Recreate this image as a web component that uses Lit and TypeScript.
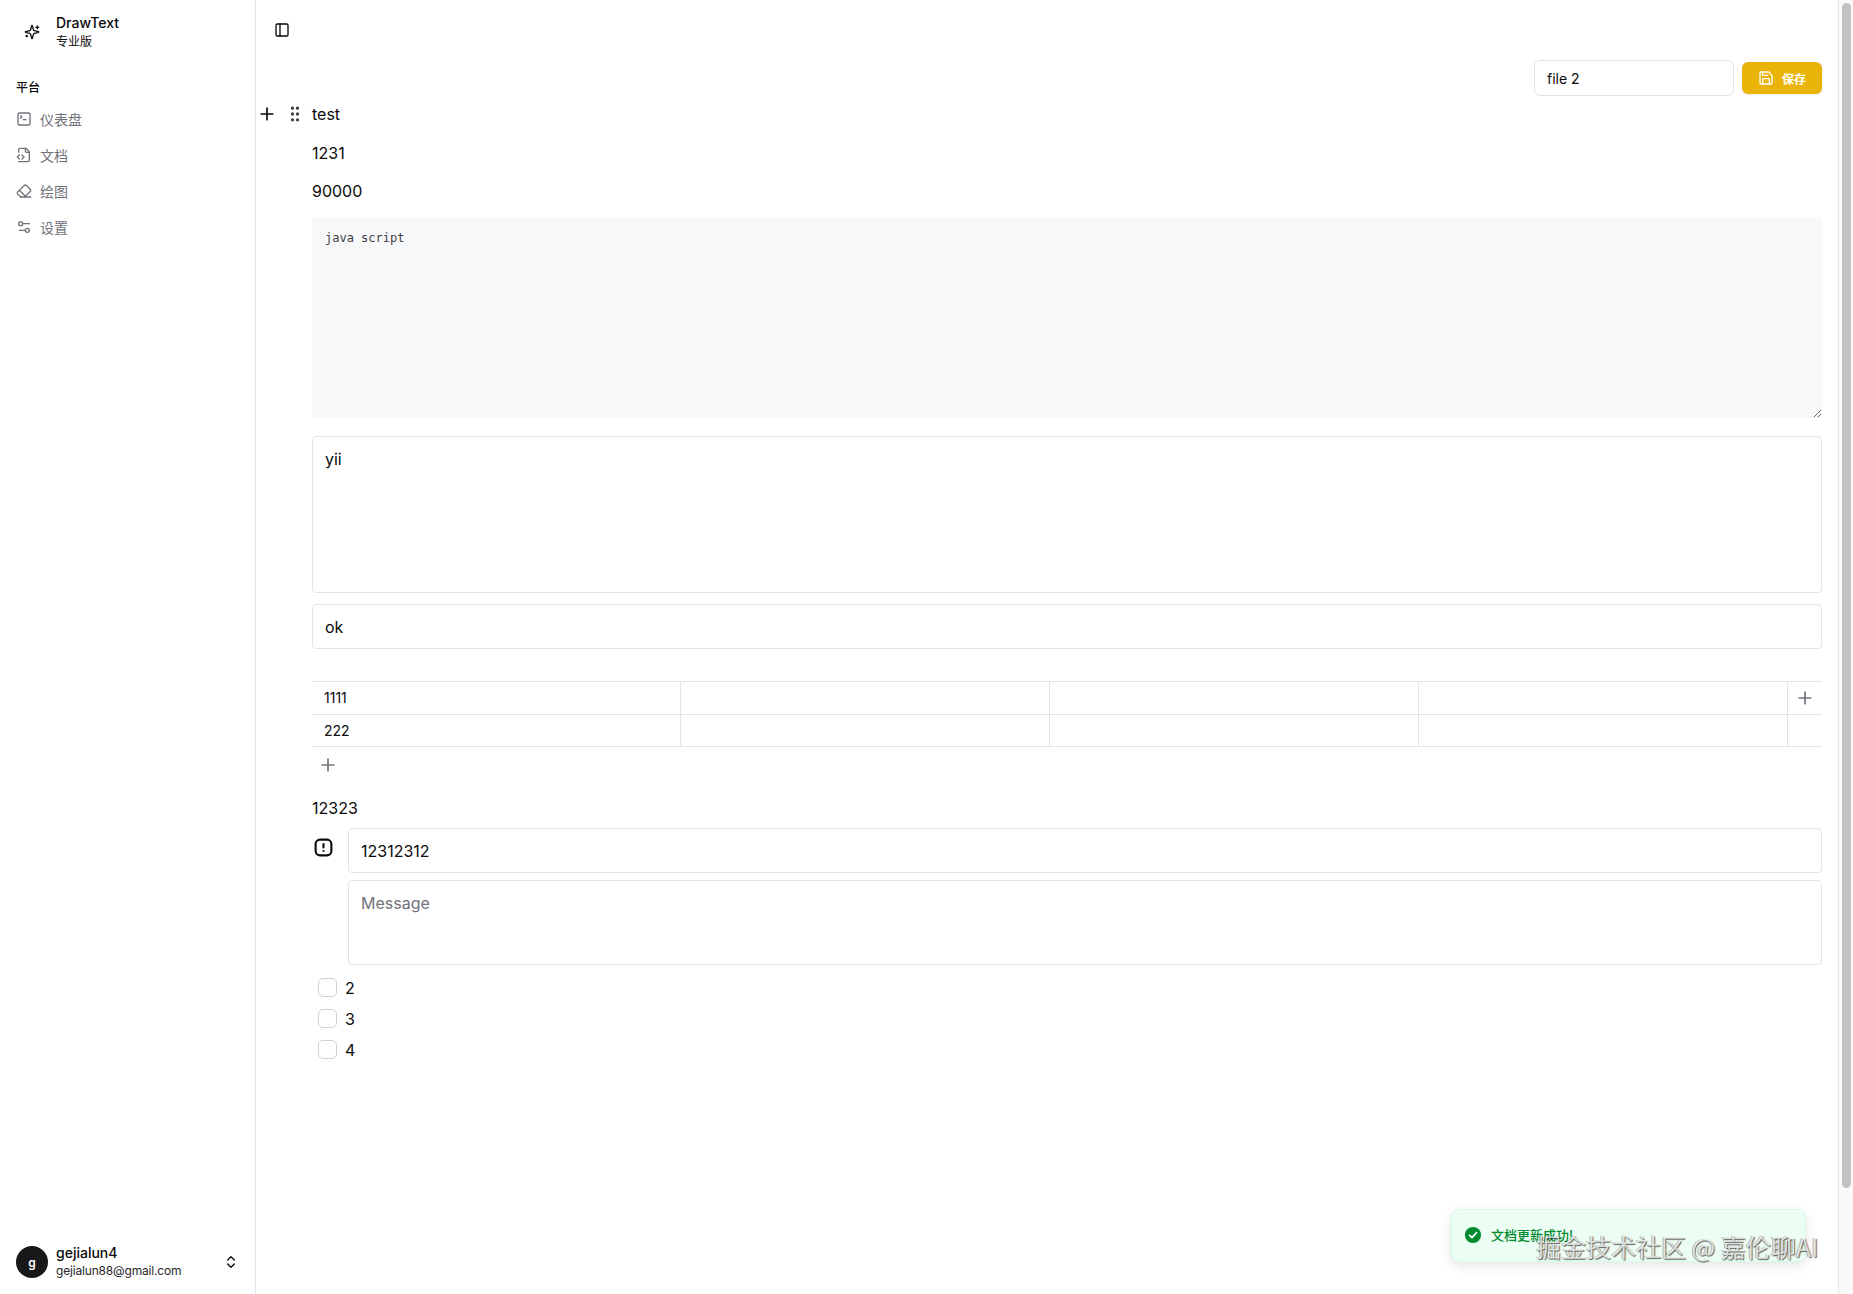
import { LitElement, html, css, svg } from "lit";
import { customElement } from "lit/decorators.js";

const icon = (body: unknown, cls = "i16") =>
  html`<svg class=${cls} viewBox="0 0 24 24" fill="none" stroke="currentColor" stroke-width="2" stroke-linecap="round" stroke-linejoin="round">${body}</svg>`;

const ICONS = {
  sparkles: svg`<path d="M9.937 15.5A2 2 0 0 0 8.5 14.063l-6.135-1.582a.5.5 0 0 1 0-.962L8.5 9.936A2 2 0 0 0 9.937 8.5l1.582-6.135a.5.5 0 0 1 .963 0L14.063 8.5A2 2 0 0 0 15.5 9.937l6.135 1.581a.5.5 0 0 1 0 .964L15.5 14.063a2 2 0 0 0-1.437 1.437l-1.582 6.135a.5.5 0 0 1-.963 0z"/><path d="M20 3v4"/><path d="M22 5h-4"/><path d="M4 17v2"/><path d="M5 18H3"/>`,
  terminal: svg`<path d="m7 11 2-2-2-2"/><path d="M11 13h4"/><rect width="18" height="18" x="3" y="3" rx="2"/>`,
  file: svg`<path d="M4 22h14a2 2 0 0 0 2-2V7l-5-5H6a2 2 0 0 0-2 2v4"/><path d="M14 2v4a2 2 0 0 0 2 2h4"/><path d="m5 12-3 3 3 3"/><path d="m9 18 3-3-3-3"/>`,
  eraser: svg`<path d="m7 21-4.3-4.3c-1-1-1-2.5 0-3.4l9.6-9.6c1-1 2.5-1 3.4 0l5.6 5.6c1 1 1 2.5 0 3.4L13 21"/><path d="M22 21H7"/><path d="m5 11 9 9"/>`,
  settings: svg`<path d="M20 7h-9"/><path d="M14 17H5"/><circle cx="17" cy="17" r="3"/><circle cx="7" cy="7" r="3"/>`,
  panel: svg`<rect width="18" height="18" x="3" y="3" rx="2"/><path d="M9 3v18"/>`,
  save: svg`<path d="M15.2 3a2 2 0 0 1 1.4.6l3.8 3.8a2 2 0 0 1 .6 1.4V19a2 2 0 0 1-2 2H5a2 2 0 0 1-2-2V5a2 2 0 0 1 2-2z"/><path d="M17 21v-7a1 1 0 0 0-1-1H8a1 1 0 0 0-1 1v7"/><path d="M7 3v4a1 1 0 0 0 1 1h7"/>`,
  chevrons: svg`<path d="m7 15 5 5 5-5"/><path d="m7 9 5-5 5 5"/>`,
  plus: svg`<path d="M5 12h14"/><path d="M12 5v14"/>`,
  alert: svg`<rect width="18" height="18" x="3" y="3" rx="5"/><path d="M12 8v4"/><path d="M12 16h.01"/>`,
  grip: svg`<g fill="currentColor"><circle cx="9" cy="5" r="1"/><circle cx="9" cy="12" r="1"/><circle cx="9" cy="19" r="1"/><circle cx="15" cy="5" r="1"/><circle cx="15" cy="12" r="1"/><circle cx="15" cy="19" r="1"/></g>`,
};

const NAV: [unknown, string][] = [
  [ICONS.terminal, "仪表盘"],
  [ICONS.file, "文档"],
  [ICONS.eraser, "绘图"],
  [ICONS.settings, "设置"],
];

@customElement("app-root")
export class AppRoot extends LitElement {
  static styles = css`
    :host {
      display: block;
      height: 1294px;
      overflow: hidden;
      position: relative;
      background: #fff;
      color: #0a0a0a;
      font-family: Inter, "Noto Sans CJK SC", sans-serif;
      font-size: 16px;
    }
    * { box-sizing: border-box; }
    .shell { display: flex; height: 100%; }
    .i16 { width: 16px; height: 16px; flex: none; display: block; }
    .i20 { width: 20px; height: 20px; flex: none; display: block; }

    .side {
      width: 256px; flex: none; display: flex; flex-direction: column;
      border-right: 1px solid #e4e4e7; padding: 0 16px;
    }
    .brand { display: flex; align-items: center; height: 64px; gap: 16px; }
    .brand .i16 { margin-left: 8px; }
    .brand b { display: block; font-size: 14px; line-height: 18px; font-weight: 500; }
    .brand span { display: block; font-size: 12px; line-height: 16px; margin-top: 2px; }
    .group { font-size: 12px; line-height: 16px; font-weight: 500; margin-top: 16px; margin-bottom: 5px; }
    .nav { display: flex; align-items: center; gap: 8px; height: 36px; color: #71717a; font-size: 14px; }
    .spacer { flex: 1; }
    .user { display: flex; align-items: center; height: 32px; margin-bottom: 16px; gap: 8px; }
    .avatar {
      width: 32px; height: 32px; border-radius: 50%; background: #18181b; color: #fff;
      display: flex; align-items: center; justify-content: center; font-size: 12px; font-weight: 600; flex: none;
    }
    .who { flex: 1; }
    .who b { display: block; font-size: 14px; line-height: 18px; font-weight: 500; margin-top: -2px; margin-bottom: 1px; }
    .who span { display: block; font-size: 12px; line-height: 16px; color: #27272a; letter-spacing: -0.18px; }

    .main { flex: 1; min-width: 0; display: flex; flex-direction: column; }
    .top { height: 60px; display: flex; align-items: center; padding-left: 18px; }
    .content { position: relative; padding: 0 16px 0 56px; }
    .toolbar { display: flex; justify-content: flex-end; align-items: center; gap: 8px; height: 36px; margin-bottom: 6px; }
    .toolbar .name {
      width: 200px; height: 36px; border: 1px solid #e4e4e7; border-radius: 6px; padding: 0 12px;
      font: 14px Inter, sans-serif; color: #0a0a0a; background: #fff; outline: none;
    }
    .btn {
      width: 80px; height: 32px; background: #eab308; color: #fff; border-radius: 6px; border: 0;
      display: flex; align-items: center; justify-content: center; gap: 8px; font-size: 12px; font-weight: 600;
      box-shadow: 0 1px 2px rgba(0,0,0,.08); font-family: Inter, "Noto Sans CJK SC", sans-serif;
    }
    p { margin: 0; line-height: 24px; }
    .p1 { margin-bottom: 15px; }
    .p2 { margin-bottom: 14px; }
    .p3 { margin-bottom: 15px; }
    .handle { position: absolute; top: 44px; color: #0a0a0a; }
    .h-plus { left: 1px; }
    .h-grip { left: 29px; color: #3f3f46; }
    textarea, .field {
      display: block; width: 100%; margin: 0; font: 16px Inter, sans-serif; color: #0a0a0a;
      border: 1px solid #e4e4e7; border-radius: 4px; padding: 9px 12px; background: #fff; outline: none;
    }
    .code {
      height: 200px; background: #f7f8f9; border: 0; font: 12px/20px "DejaVu Sans Mono", monospace;
      padding: 10px 13px; color: #3f3f46; margin-bottom: 18px; resize: vertical;
    }
    .yii { height: 157px; resize: none; margin-bottom: 11px; padding-top: 12px; }
    .ok { height: 45px; margin-bottom: 32px; }

    .tbl { border-top: 1px solid #e4e4e7; }
    .row { display: grid; grid-template-columns: repeat(4, 369px) 1fr; height: 33px; border-bottom: 1px solid #e4e4e7; }
    .row + .row { height: 32px; }
    .row div { border-right: 1px solid #e4e4e7; padding-left: 12px; font-size: 14px; line-height: 31px; }
    .row div:last-child { border-right: 0; padding: 0; display: flex; align-items: center; justify-content: center; color: #71717a; }
    .addrow { height: 36px; padding-left: 6px; display: flex; align-items: center; color: #71717a; }
    .t123 { margin-top: 13px; margin-bottom: 8px; }

    .callout { display: grid; grid-template-columns: 36px 1fr; row-gap: 7px; }
    .callout > svg { width: 21px; height: 21px; margin: 9px 0 0 1px; color: #0a0a0a; stroke-width: 2.4; }
    .title { height: 45px; border-radius: 4px; }
    .msg { grid-column: 2; height: 85px; resize: none; border-radius: 4px; padding-top: 12px; }
    .msg::placeholder { color: #71717a; }
    .checks { padding: 7px 0 0 6px; }
    .check { display: flex; align-items: center; gap: 8px; height: 31px; }
    .box { width: 19px; height: 19px; border: 1px solid #d0d0d5; border-radius: 5px; }

    .bar { width: 15px; flex: none; border-left: 1px solid #e8e8e8; background: #fafafa; padding: 3px 3px 0 3px; }
    .thumb { width: 9px; height: 1185px; background: #c2c2c2; border-radius: 5px; }

    .toast {
      position: absolute; left: 1451px; top: 1209px; width: 355px; height: 53px; padding: 0 12px 2px;
      display: flex; align-items: center; gap: 9px; background: #ecfdf3; border: 1px solid #d3fde5;
      border-radius: 8px; box-shadow: 0 4px 12px rgba(0,0,0,.1); color: #008a2e; font-size: 13px; font-weight: 500;
    }
    .toast svg { width: 18px; height: 18px; flex: none; }
    .mark {
      position: absolute; left: 1536px; top: 1230px; font: 25px/32px "Noto Sans CJK SC", sans-serif; white-space: nowrap;
      color: rgba(255,255,255,.75); text-shadow: 1px 1px 1px rgba(0,0,0,.6), -1px 0 0 rgba(0,0,0,.3);
    }
  `;

  render() {
    return html`
      <div class="shell">
        <aside class="side">
          <div class="brand">
            ${icon(ICONS.sparkles)}
            <div><b>DrawText</b><span>专业版</span></div>
          </div>
          <div class="group">平台</div>
          ${NAV.map(([p, t]) => html`<div class="nav">${icon(p)}<span>${t}</span></div>`)}
          <div class="spacer"></div>
          <div class="user">
            <div class="avatar">g</div>
            <div class="who"><b>gejialun4</b><span>gejialun88@gmail.com</span></div>
            ${icon(ICONS.chevrons)}
          </div>
        </aside>
        <main class="main">
          <div class="top">${icon(ICONS.panel)}</div>
          <div class="content">
            <div class="toolbar">
              <input class="name" value="file 2" />
              <button class="btn">${icon(ICONS.save)}<span>保存</span></button>
            </div>
            <div class="handle h-plus">${icon(ICONS.plus, "i20")}</div>
            <div class="handle h-grip">${icon(ICONS.grip, "i20")}</div>
            <p class="p1">test</p>
            <p class="p2">1231</p>
            <p class="p3">90000</p>
            <textarea class="code">java script</textarea>
            <textarea class="yii">yii</textarea>
            <input class="field ok" value="ok" />
            <div class="tbl">
              <div class="row"><div>1111</div><div></div><div></div><div></div><div>${icon(ICONS.plus, "i20")}</div></div>
              <div class="row"><div>222</div><div></div><div></div><div></div><div></div></div>
            </div>
            <div class="addrow">${icon(ICONS.plus, "i20")}</div>
            <p class="t123">12323</p>
            <div class="callout">
              ${icon(ICONS.alert)}
              <input class="field title" value="12312312" />
              <textarea class="msg" placeholder="Message"></textarea>
            </div>
            <div class="checks">
              ${["2", "3", "4"].map((n) => html`<div class="check"><div class="box"></div><span>${n}</span></div>`)}
            </div>
          </div>
        </main>
        <div class="bar"><div class="thumb"></div></div>
      </div>
      <div class="toast">
        <svg viewBox="0 0 20 20"><circle cx="10" cy="10" r="9" fill="#008a2e"/><path d="m6.2 10.3 2.6 2.6 5-5.4" fill="none" stroke="#fff" stroke-width="2" stroke-linecap="round" stroke-linejoin="round"/></svg>
        <span>文档更新成功!</span>
      </div>
      <div class="mark">掘金技术社区 @ 嘉伦聊AI</div>
    `;
  }
}
